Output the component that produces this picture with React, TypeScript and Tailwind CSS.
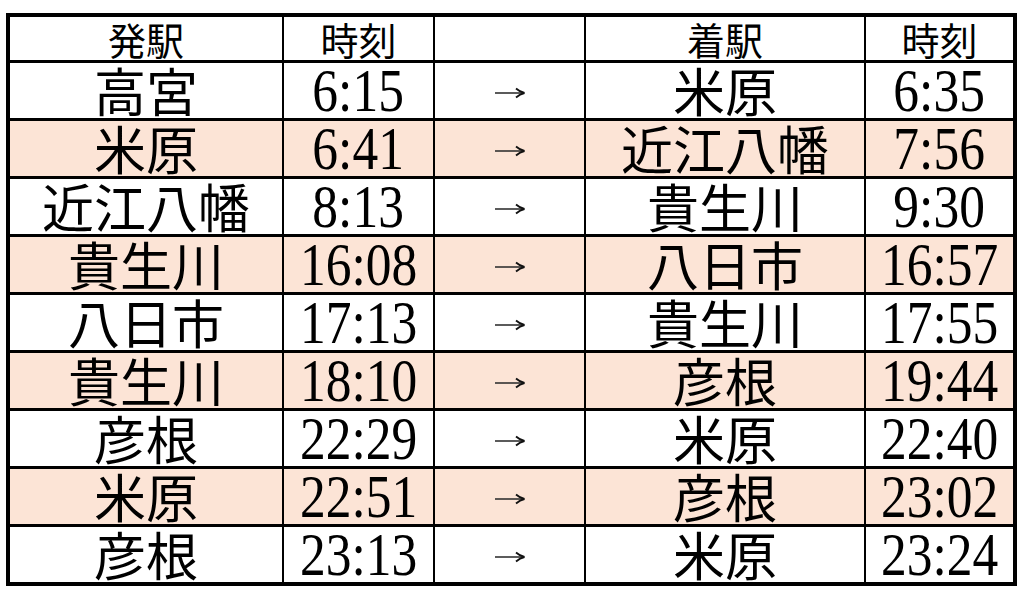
const rows: [string, string, string, string][] = [
  ["高宮", "6:15", "米原", "6:35"],
  ["米原", "6:41", "近江八幡", "7:56"],
  ["近江八幡", "8:13", "貴生川", "9:30"],
  ["貴生川", "16:08", "八日市", "16:57"],
  ["八日市", "17:13", "貴生川", "17:55"],
  ["貴生川", "18:10", "彦根", "19:44"],
  ["彦根", "22:29", "米原", "22:40"],
  ["米原", "22:51", "彦根", "23:02"],
  ["彦根", "23:13", "米原", "23:24"],
];

const jp = "font-['Noto_Sans_CJK_JP',sans-serif]";
const serif = "font-['Liberation_Serif',serif]";

function Cell({
  col,
  last,
  pink,
  children,
}: {
  col: number;
  last: boolean;
  pink: boolean;
  children?: React.ReactNode;
}) {
  return (
    <div
      className={`flex items-center justify-center border-black ${
        col < 4 ? "border-r-2" : ""
      } ${last ? "" : "border-b-[3px]"} ${pink ? "bg-[#fce4d6]" : "bg-white"}`}
    >
      {children}
    </div>
  );
}

function Station({ name }: { name: string }) {
  return (
    <span className={`${jp} text-[52px] leading-[1.05] text-black whitespace-nowrap`}>
      {name}
    </span>
  );
}

function Time({ t }: { t: string }) {
  return (
    <span
      className={`${serif} inline-block scale-x-[0.83] text-[62px] leading-[0.9] text-black whitespace-nowrap`}
    >
      {t}
    </span>
  );
}

// thin arrow like the mincho "→"
function Arrow() {
  return (
    <svg width="32" height="14" viewBox="0 0 32 14" className="mt-[4px]">
      <line x1="1" y1="7" x2="29" y2="7" stroke="#333" strokeWidth="1.6" />
      <path d="M22 2.5 Q26 6 30.5 7 Q26 8 22 11.5" fill="none" stroke="#111" strokeWidth="1.8" />
    </svg>
  );
}

export default function App() {
  const header = ["発駅", "時刻", "", "着駅", "時刻"];
  return (
    <div className="min-h-screen w-full bg-white pt-[13px] pl-[6px]">
      <div className="grid w-fit grid-cols-[274px_151px_151px_280px_147px] grid-rows-[46px_repeat(8,58px)_55px] border-4 border-black">
        {header.map((h, i) => (
          <Cell key={`h${i}`} col={i} last={false} pink={false}>
            <span className={`${jp} text-[38px] leading-[1.05] text-black`}>{h}</span>
          </Cell>
        ))}
        {rows.map((r, ri) => {
          const last = ri === rows.length - 1;
          const pink = ri % 2 === 1;
          return [
            <Cell key={`${ri}a`} col={0} last={last} pink={pink}>
              <Station name={r[0]} />
            </Cell>,
            <Cell key={`${ri}b`} col={1} last={last} pink={pink}>
              <Time t={r[1]} />
            </Cell>,
            <Cell key={`${ri}c`} col={2} last={last} pink={pink}>
              <Arrow />
            </Cell>,
            <Cell key={`${ri}d`} col={3} last={last} pink={pink}>
              <Station name={r[2]} />
            </Cell>,
            <Cell key={`${ri}e`} col={4} last={last} pink={pink}>
              <Time t={r[3]} />
            </Cell>,
          ];
        })}
      </div>
    </div>
  );
}
